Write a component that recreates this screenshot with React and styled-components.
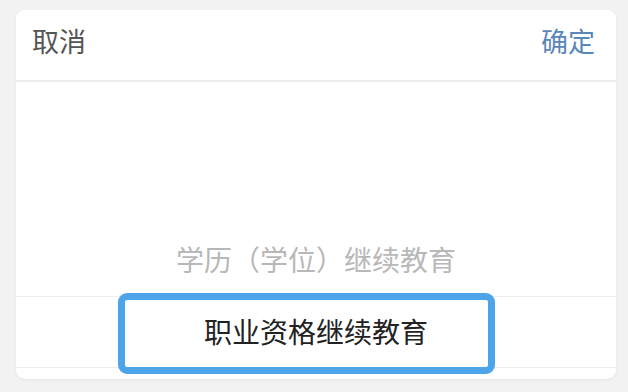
import React from "react";
import styled, { createGlobalStyle } from "styled-components";

const GlobalStyle = createGlobalStyle`
  html, body {
    margin: 0;
    padding: 0;
    background: #f2f2f2;
    font-family: "Noto Sans CJK SC", "Noto Sans", sans-serif;
  }
`;

const items = ["学历（学位）继续教育", "职业资格继续教育"];
const selected = 1;

export default function App() {
  return (
    <>
      <GlobalStyle />
      <Page>
        <Card>
          <Header>
            <HeaderButton>取消</HeaderButton>
            <HeaderButton confirm>确定</HeaderButton>
          </Header>
          <Body>
            <Spacer />
            {items.map((label, i) => (
              <Row key={label} active={i === selected}>
                <RowText active={i === selected}>{label}</RowText>
                {i === selected && <Highlight />}
              </Row>
            ))}
            <Tail />
          </Body>
        </Card>
      </Page>
    </>
  );
}

const Page = styled.div`
  width: 628px;
  height: 392px;
  padding: 10px 12px 13px 16px;
  box-sizing: border-box;
`;

const Card = styled.div`
  width: 600px;
  height: 369px;
  background: #fff;
  border-radius: 9px;
  box-shadow: 0 1px 3px rgba(0, 0, 0, 0.06);
  display: flex;
  flex-direction: column;
  overflow: hidden;
`;

const Header = styled.div`
  height: 70px;
  border-bottom: 2px solid #ebebeb;
  display: flex;
  align-items: center;
  justify-content: space-between;
  padding: 0 21px 0 16px;
  flex-shrink: 0;
`;

const HeaderButton = styled.span`
  font-size: 27px;
  line-height: 1;
  margin-top: -10px;
  color: ${(p) => (p.confirm ? "#5a87ba" : "#555")};
`;

const Body = styled.div`
  flex: 1;
  display: flex;
  flex-direction: column;
`;

const Spacer = styled.div`
  flex: 1;
`;

const Row = styled.div`
  position: relative;
  height: ${(p) => (p.active ? "70px" : "72px")};
  display: flex;
  align-items: center;
  justify-content: center;
  border-top: ${(p) => (p.active ? "1px solid #ececec" : "none")};
  border-bottom: ${(p) => (p.active ? "1px solid #ececec" : "none")};
`;

const RowText = styled.span`
  font-size: 28px;
  line-height: 1;
  margin-top: ${(p) => (p.active ? "-2px" : "-3px")};
  color: ${(p) => (p.active ? "#222" : "#b8b8b8")};
`;

const Highlight = styled.div`
  position: absolute;
  left: 102px;
  top: -4px;
  width: 377px;
  height: 81px;
  box-sizing: border-box;
  border: 7px solid #4ea4e9;
  border-radius: 9px;
`;

const Tail = styled.div`
  height: 11px;
  flex-shrink: 0;
`;
